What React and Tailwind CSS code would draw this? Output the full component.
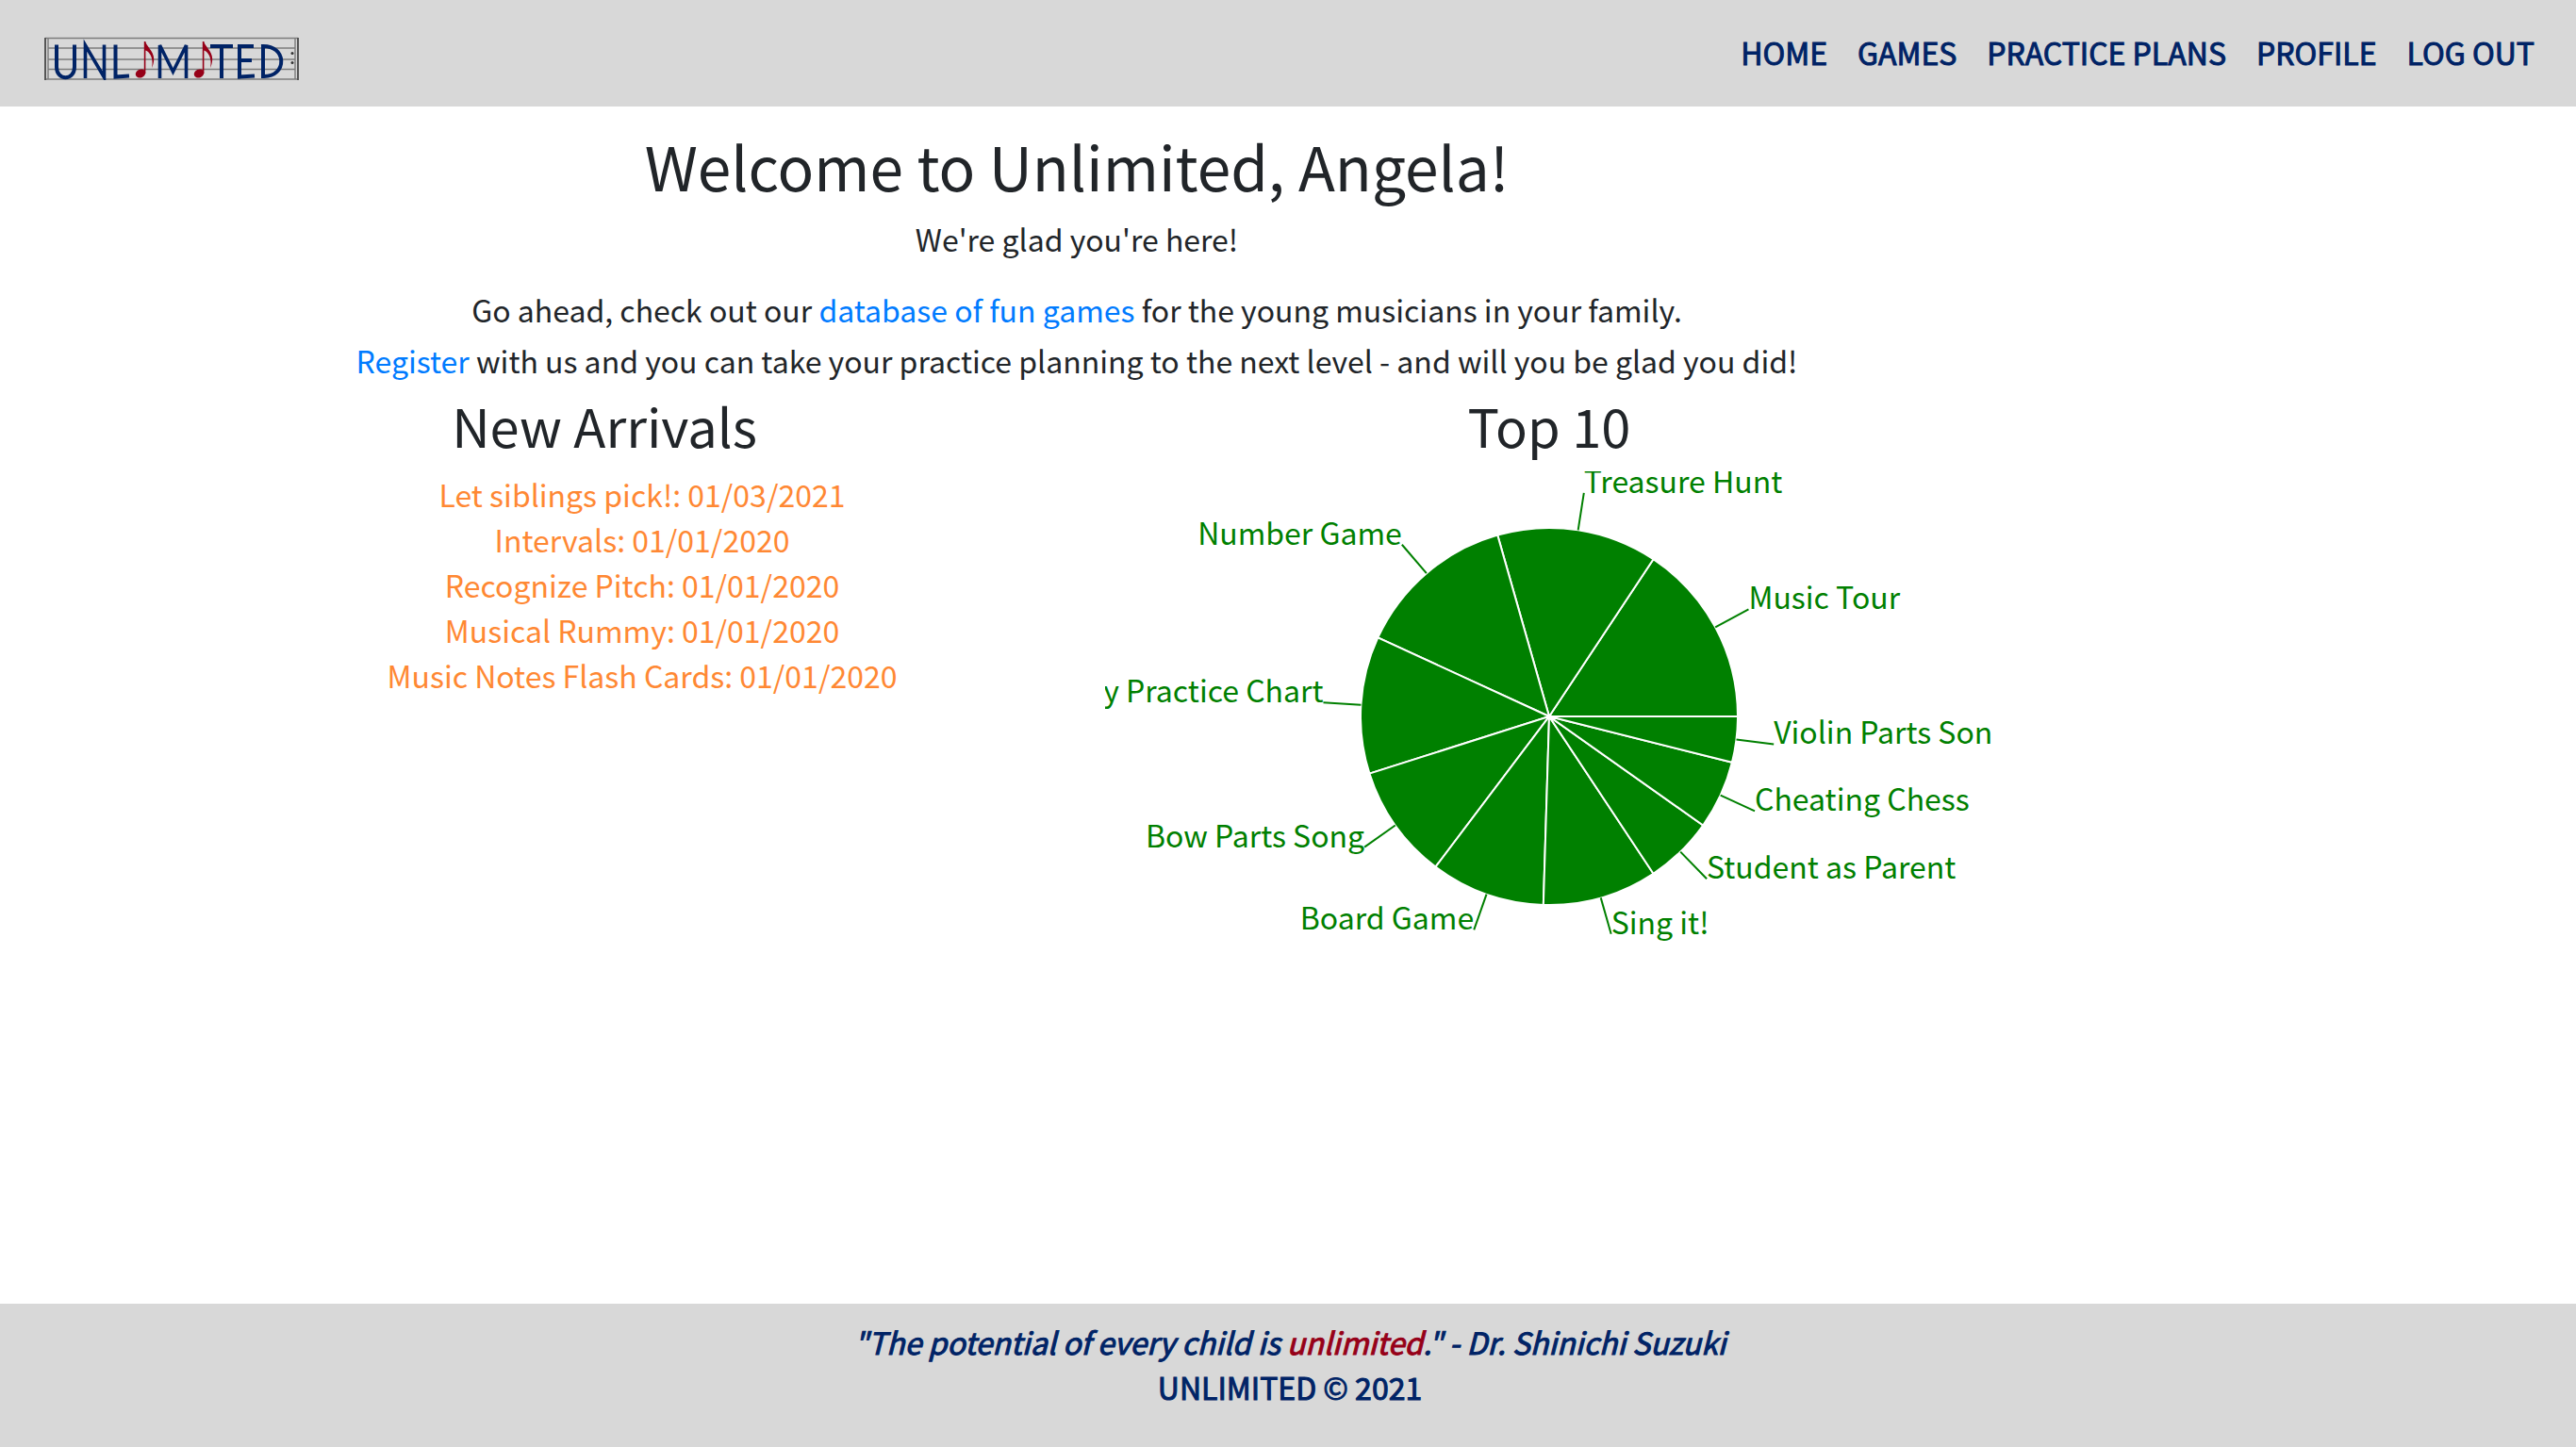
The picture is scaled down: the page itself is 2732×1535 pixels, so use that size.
const INK = "#002366";
const navItems = ["HOME", "GAMES", "PRACTICE PLANS", "PROFILE", "LOG OUT"];
const arrivals = [
  ["Let siblings pick!", "01/03/2021"],
  ["Intervals", "01/01/2020"],
  ["Recognize Pitch", "01/01/2020"],
  ["Musical Rummy", "01/01/2020"],
  ["Music Notes Flash Cards", "01/01/2020"],
];
const topGames = [
  ["Music Tour", 8],
  ["Treasure Hunt", 7],
  ["Number Game", 7],
  ["y Practice Chart", 6],
  ["Bow Parts Song", 5],
  ["Board Game", 5],
  ["Sing it!", 5],
  ["Student as Parent", 3],
  ["Cheating Chess", 3],
  ["Violin Parts Son", 2],
];

function Note({ x }) {
  return (
    <g transform={`translate(${x} 0)`} fill="#960018">
      <ellipse cx="5" cy="39" rx="5.4" ry="4.4" transform="rotate(-25 5 39)" />
      <path d="M8.8 5h1.600c.5 5 8.800 10 8.800 18.500c0 4-1 7-2.200 9.500c.6-3 .8-6 .2-9c-.8-4.500-3.500-8.500-6.800-9.500V39H8.800z" />
    </g>
  );
}

function Logo() {
  return (
    <svg viewBox="0 0 270 46" className="h-[46px] w-[270px]" role="img" aria-label="Unlimited">
      <g stroke="#7c7c7c" strokeWidth="1.400" fill="none">
        <path d="M1 1.500H269M4 12H266M4 24H266M4 34.500H266M1 45H269" />
        <path d="M4 1V45M266 1V45" />
      </g>
      <path d="M1 1V46M269 1V46" stroke="#555" strokeWidth="2" />
      <g stroke={INK} strokeWidth="4" fill="none">
        <path d="M13 8.500V32C13 47 32 47 32 32V8.500" />
        <path d="M43.500 44V9L63.500 43V8.500" strokeWidth="3.600" />
        <path d="M75.500 8.500V42.500L90 41.500" />
        <path d="M122.500 44V9L136.500 37L150.500 9V44" strokeWidth="3.600" />
        <path d="M176 10H200M188 10V44" />
        <path d="M222 10H207V42.500L223 41.500M207 25H220" />
        <path d="M232 10V42C258 43 258 8 230 10" />
      </g>
      <Note x={97} />
      <Note x={159} />
      <circle cx="263" cy="17.500" r="1.500" fill="#333" />
      <circle cx="263" cy="27.500" r="1.500" fill="#333" />
    </svg>
  );
}

function TopGamesPie() {
  const cx = 471, cy = 260, r = 200, total = topGames.reduce((s, g) => s + g[1], 0);
  const at = (deg, d) => [cx + d * Math.cos((deg * Math.PI) / 180), cy - d * Math.sin((deg * Math.PI) / 180)];
  let start = 0;
  const slices = topGames.map(([name, value]) => {
    const from = start;
    start += (value / total) * 360;
    return { name, from, to: start, mid: (from + start) / 2 };
  });
  return (
    <svg viewBox="0 0 942 520" className="h-[520px] w-[942px] overflow-hidden text-[32px]" role="img" aria-label="Top 10 games">
      {slices.map((s) => {
        const [x1, y1] = at(s.from, r);
        const [x2, y2] = at(s.to, r);
        return <path key={s.name} d={`M${cx} ${cy}L${x1} ${y1}A${r} ${r} 0 0 0 ${x2} ${y2}Z`} fill="green" stroke="#fff" strokeWidth="2" />;
      })}
      {slices.map((s) => {
        const [x1, y1] = at(s.mid, r);
        const [x2, y2] = at(s.mid, 240);
        return (
          <g key={s.name}>
            <path d={`M${x1} ${y1}L${x2} ${y2}`} stroke="green" strokeWidth="2" />
            <text x={x2} y={y2} fill="green" textAnchor={x2 > cx ? "start" : "end"}>{s.name}</text>
          </g>
        );
      })}
    </svg>
  );
}

export default function App() {
  return (
    <div className="flex min-h-screen flex-col bg-white font-['Noto_Sans_CJK_SC','Noto_Sans',sans-serif] text-[32px] leading-[48px] text-[#212529]">
      <header className="flex items-start justify-between bg-[#d8d8d8] pt-[31px] pr-11 pb-[34px] pl-[47px]">
        <a href="#home" className="mt-2 -mb-2"><Logo /></a>
        <nav className="flex gap-8 text-[#002366] [-webkit-text-stroke:1px_#002366]">
          {navItems.map((n) => <a key={n} href="#nav">{n}</a>)}
        </nav>
      </header>
      <main className="w-[2284px] max-w-full grow pt-6 text-center">
        <h1 className="text-[64px] leading-[76px]">Welcome to Unlimited, Angela!</h1>
        <p className="mt-4">We're glad you're here!</p>
        <p className="mt-6 leading-[54px]">
          Go ahead, check out our <a href="#games" className="text-[#007bff]">database of fun games</a> for the young musicians in your family.
          <br />
          <a href="#register" className="text-[#007bff]">Register</a> with us and you can take your practice planning to the next level - and will you be glad you did!
        </p>
        <div className="mt-2 grid grid-cols-2 px-[140px]">
          <section>
            <h2 className="mb-4 text-[56px] leading-[67px]">New Arrivals</h2>
            <ul className="pl-20 text-[#ff8833]">
              {arrivals.map(([n, d]) => <li key={n}>{n}: {d}</li>)}
            </ul>
          </section>
          <section className="flex flex-col items-center">
            <h2 className="mb-4 text-[56px] leading-[67px]">Top 10</h2>
            <TopGamesPie />
          </section>
        </div>
      </main>
      <footer className="bg-[#d8d8d8] pt-4 pb-10 pl-1 text-center text-[#002366] [-webkit-text-stroke:1px]">
        <p className="italic">"The potential of every child is <span className="text-[#960018]">unlimited</span>." - Dr. Shinichi Suzuki</p>
        <p>UNLIMITED © 2021</p>
      </footer>
    </div>
  );
}
